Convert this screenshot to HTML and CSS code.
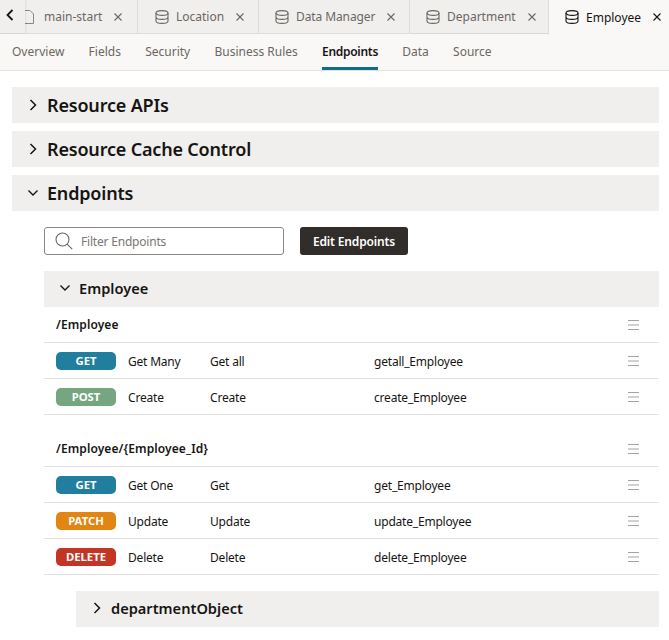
FILE: index.html
```html
<!DOCTYPE html>
<html lang="en">
<head>
  <meta charset="UTF-8" />
  <title>Employee Endpoints</title>
  <link rel="stylesheet" href="styles.css">
</head>
<body>
  <svg class="defs" width="0" height="0">
    <symbol id="db" viewBox="0 0 14 14">
      <ellipse cx="7" cy="3" rx="6" ry="2.4" fill="none" stroke="currentColor" stroke-width="1.1"/>
      <path d="M1 3v8c0 1.3 2.7 2.4 6 2.4s6-1.1 6-2.4V3M1 7c0 1.3 2.7 2.4 6 2.4S13 8.300 13 7" fill="none" stroke="currentColor" stroke-width="1.1"/>
    </symbol>
    <symbol id="menu" viewBox="0 0 11 10">
      <path d="M0 .5h11M0 5h11M0 9.500h11" fill="none" stroke="currentColor"/>
    </symbol>
    <symbol id="right" viewBox="0 0 8 12">
      <path d="M1.500 1l5 5-5 5" fill="none" stroke="currentColor" stroke-width="1.500"/>
    </symbol>
    <symbol id="down" viewBox="0 0 12 8">
      <path d="M1.500 1.500l4.500 4.500 4.500-4.500" fill="none" stroke="currentColor" stroke-width="1.400"/>
    </symbol>
    <symbol id="close" viewBox="0 0 8 8">
      <path d="M.5 .5l7 7M7.500 .5l-7 7" fill="none" stroke="currentColor" stroke-width="1.100"/>
    </symbol>
  </svg>

  <div class="tabs">
    <button class="tab-back">
      <svg width="8" height="12"><path d="M6.500 1l-5 5 5 5" fill="none" stroke="#161513" stroke-width="1.800"/></svg>
    </button>
    <div class="tab tab-main">
      <svg class="tab-file" width="9" height="14"><path d="M0 13.500h8.500V4L5 .5H0" fill="none" stroke="#8b8683" stroke-width="1"/></svg>
      <span>main-start</span><svg class="tab-x"><use href="#close"/></svg>
    </div>
    <div class="tab tab-loc"><svg class="tab-db"><use href="#db"/></svg><span>Location</span><svg class="tab-x"><use href="#close"/></svg></div>
    <div class="tab tab-dm"><svg class="tab-db"><use href="#db"/></svg><span>Data Manager</span><svg class="tab-x"><use href="#close"/></svg></div>
    <div class="tab tab-dept"><svg class="tab-db"><use href="#db"/></svg><span>Department</span><svg class="tab-x"><use href="#close"/></svg></div>
    <div class="tab tab-active"><svg class="tab-db"><use href="#db"/></svg><span>Employee</span><svg class="tab-x"><use href="#close"/></svg></div>
  </div>

  <nav class="subnav">
    <a>Overview</a>
    <a>Fields</a>
    <a>Security</a>
    <a>Business Rules</a>
    <a class="current">Endpoints</a>
    <a>Data</a>
    <a>Source</a>
  </nav>

  <main class="content">
    <div class="section"><svg class="chev-r"><use href="#right"/></svg>Resource APIs</div>
    <div class="section"><svg class="chev-r"><use href="#right"/></svg>Resource Cache Control</div>
    <div class="section"><svg class="chev-d"><use href="#down"/></svg>Endpoints</div>

    <div class="endpoints">
      <div class="toolbar">
        <div class="filter">
          <svg width="18" height="18" viewBox="0 0 18 18"><circle cx="7.500" cy="7.500" r="6.500" fill="none" stroke="#6b6763" stroke-width="1.100"/><path d="M12.200 12.200l5 5" stroke="#6b6763" stroke-width="1.100"/></svg>
          <span>Filter Endpoints</span>
        </div>
        <button class="edit">Edit Endpoints</button>
      </div>

      <div class="subhead"><svg class="chev-d"><use href="#down"/></svg>Employee</div>

      <div class="path"><span>/Employee</span><svg class="menu"><use href="#menu"/></svg></div>
      <div class="row">
        <b class="badge get">GET</b><span class="c1">Get Many</span><span class="c2">Get all</span><span class="c3">getall_Employee</span>
        <svg class="menu"><use href="#menu"/></svg>
      </div>
      <div class="row">
        <b class="badge post">POST</b><span class="c1">Create</span><span class="c2">Create</span><span class="c3">create_Employee</span>
        <svg class="menu"><use href="#menu"/></svg>
      </div>

      <div class="path path-gap"><span>/Employee/{Employee_Id}</span><svg class="menu"><use href="#menu"/></svg></div>
      <div class="row">
        <b class="badge get">GET</b><span class="c1">Get One</span><span class="c2">Get</span><span class="c3">get_Employee</span>
        <svg class="menu"><use href="#menu"/></svg>
      </div>
      <div class="row">
        <b class="badge patch">PATCH</b><span class="c1">Update</span><span class="c2">Update</span><span class="c3">update_Employee</span>
        <svg class="menu"><use href="#menu"/></svg>
      </div>
      <div class="row">
        <b class="badge delete">DELETE</b><span class="c1">Delete</span><span class="c2">Delete</span><span class="c3">delete_Employee</span>
        <svg class="menu"><use href="#menu"/></svg>
      </div>

      <div class="subhead nested"><svg class="chev-r"><use href="#right"/></svg>departmentObject</div>
    </div>
  </main>
</body>
</html>
```

FILE: styles.css
```css
html, body {
  height: 640px;
  overflow: hidden;
}
body {
  margin: 0;
  background: #fff;
  color: #161513;
  font-family: "Noto Sans", "Open Sans", sans-serif;
  font-size: 12px;
}
.defs {
  position: absolute;
}

/* tab strip */
.tabs {
  display: flex;
  height: 34px;
  background: #f1efed;
  box-sizing: border-box;
  border-bottom: 1px solid #dedcd9;
  color: #6b6763;
}
.tab-back {
  width: 25px;
  height: 33px;
  margin-right: -2px;
  padding: 0 5px 0 0;
  border: none;
  background: #f1efed;
  box-shadow: 1px 0 2px rgba(0,0,0,0.08);
  position: relative;
}
.tab {
  display: flex;
  align-items: center;
  height: 33px;
  box-sizing: border-box;
  border-right: 1px solid #dedcd9;
  font-size: 12px;
  white-space: nowrap;
}
.tab-main { width: 115px; }
.tab-file { margin: 0 10px 0 2px; }
.tab-loc { width: 121px; padding-left: 17px; }
.tab-dm { width: 151px; padding-left: 16px; letter-spacing: -0.1px; }
.tab-dept { width: 139px; padding-left: 16px; box-shadow: 2px 0 3px rgba(0,0,0,0.05); }
.tab-active {
  flex: 1;
  padding-left: 16px;
  height: 34px;
  border-right: none;
  background: #f9f8f6;
  color: #161513;
}
.tab-db {
  width: 14px;
  height: 14px;
  margin-right: 7px;
}
.tab-x {
  width: 8px;
  height: 8px;
  margin-left: 12px;
}

/* sub navigation */
.subnav {
  display: flex;
  gap: 24.25px;
  height: 37px;
  padding-left: 12px;
  box-sizing: border-box;
  background: #f9f8f6;
  border-bottom: 1px solid #e4e2df;
  color: #6b6763;
  line-height: 35px;
}
.subnav a {
  height: 36px;
  box-sizing: border-box;
}
.subnav .current {
  color: #161513;
  font-weight: 600;
  letter-spacing: -0.3px;
  border-bottom: 3px solid #0f6d8c;
}

/* main */
.content {
  padding: 16px 10px 0 12px;
}
.section {
  display: flex;
  align-items: center;
  height: 36px;
  margin-bottom: 8px;
  background: #f1efed;
  font-size: 18px;
  font-weight: 600;
  letter-spacing: -0.18px;
}
.chev-r {
  width: 8px;
  height: 12px;
  margin: 0 10px 0 17px;
}
.chev-d {
  width: 12px;
  height: 8px;
  margin: 0 8px 0 15px;
}
.endpoints {
  padding: 8px 0 0 32px;
}
.toolbar {
  display: flex;
  gap: 16px;
  margin-bottom: 16px;
}
.filter {
  display: flex;
  align-items: center;
  gap: 8px;
  width: 240px;
  height: 28px;
  padding-left: 10px;
  box-sizing: border-box;
  border: 1px solid #8b8683;
  border-radius: 3px;
  color: #7a7672;
  letter-spacing: -0.2px;
}
.edit {
  width: 108px;
  height: 28px;
  padding: 0;
  border: none;
  border-radius: 3px;
  background: #312d2a;
  color: #fff;
  font: 600 12px "Noto Sans", "Open Sans", sans-serif;
  letter-spacing: -0.15px;
}
.subhead {
  display: flex;
  align-items: center;
  height: 36px;
  padding-bottom: 2px;
  box-sizing: border-box;
  background: #f1efed;
  font-size: 14.6px;
  font-weight: 600;
}
.subhead.nested {
  margin: 16px 0 0 32px;
}
.path, .row {
  display: flex;
  align-items: center;
  height: 36px;
  box-sizing: border-box;
  border-bottom: 1px solid #e4e2df;
  position: relative;
}
.path {
  padding-left: 12px;
  font-weight: 600;
  letter-spacing: 0.1px;
}
.path-gap {
  margin-top: 16px;
}
.row {
  padding-left: 12px;
}
.badge {
  width: 60px;
  height: 18px;
  border-radius: 5px;
  color: #fff;
  font-size: 11.3px;
  font-weight: 700;
  line-height: 17px;
  text-align: center;
}
.get { background: #227e9e; }
.post { background: #76a67f; }
.patch { background: #e38512; }
.delete { background: #c53525; }
.c1, .c2, .c3 {
  padding-top: 2px;
  letter-spacing: -0.2px;
}
.c1 { width: 82px; margin-left: 12px; }
.c2 { width: 164px; }
.menu {
  position: absolute;
  right: 20px;
  top: 13px;
  width: 11px;
  height: 10px;
  color: #a5a29f;
}
```
